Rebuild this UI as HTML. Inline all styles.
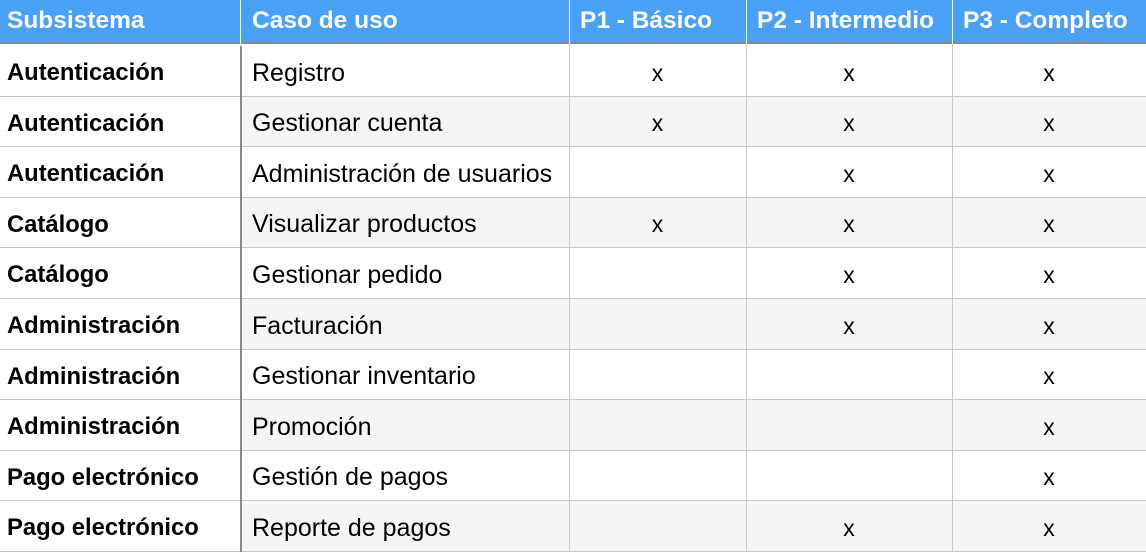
<!DOCTYPE html>
<html><head><meta charset="utf-8"><style>
*{margin:0;padding:0;box-sizing:border-box}
body{width:1146px;height:552px;overflow:hidden;background:#fff;font-family:"Liberation Sans",Arial,sans-serif;position:relative}
.hdr{position:absolute;left:0;top:0;width:1146px;height:44px;background:#48a0f7;border-bottom:2px solid #8a8a8a}
.h{position:absolute;top:0;height:44px;line-height:42px;color:#fff;font-weight:bold;font-size:24.5px;white-space:nowrap}
.vs{position:absolute;top:0;width:1px;height:44px;background:#fff}
.row{position:absolute;left:0;width:1146px;border-bottom:1px solid #c9c9c9}
.alt{background:#f5f5f5}
.c{position:absolute;top:2px;height:100%;display:flex;align-items:center;font-size:25px;color:#000;white-space:nowrap}
.b{font-weight:bold;font-size:23.8px}
.x{justify-content:center;font-size:23px}
.vl{position:absolute;top:44px;width:1px;height:508px;background:#c9c9c9}
</style></head><body>
<div class="hdr">
<div class="h" style="left:7px">Subsistema</div>
<div class="vs" style="left:240px"></div>
<div class="h" style="left:252px">Caso de uso</div>
<div class="vs" style="left:569px"></div>
<div class="h" style="left:580px">P1 - Básico</div>
<div class="vs" style="left:746px"></div>
<div class="h" style="left:757px">P2 - Intermedio</div>
<div class="vs" style="left:952px"></div>
<div class="h" style="left:963px">P3 - Completo</div>
</div>
<div id="rows"></div>
<div class="vl" style="left:569px"></div>
<div class="vl" style="left:746px"></div>
<div class="vl" style="left:952px"></div>
<div style="position:absolute;left:240px;top:46px;width:2px;height:506px;background:#8a8a8a"></div>
<script>
var d=[["Autenticación","Registro",1,1,1],["Autenticación","Gestionar cuenta",1,1,1],["Autenticación","Administración de usuarios",0,1,1],["Catálogo","Visualizar productos",1,1,1],["Catálogo","Gestionar pedido",0,1,1],["Administración","Facturación",0,1,1],["Administración","Gestionar inventario",0,0,1],["Administración","Promoción",0,0,1],["Pago electrónico","Gestión de pagos",0,0,1],["Pago electrónico","Reporte de pagos",0,1,1]];
var h="";
for(var i=0;i<10;i++){var t=Math.round(46+50.6*i),b=Math.round(46+50.6*(i+1));var r=d[i];
h+='<div class="row" style="top:'+t+'px;height:'+(b-t)+'px">';
if(i%2==1)h+='<div class="alt" style="position:absolute;left:241px;top:0;width:905px;height:100%"></div>';
h+='<div class="c b" style="left:7px">'+r[0]+'</div><div class="c" style="left:252px">'+r[1]+'</div>';
var xs=[[569,177],[746,206],[952,194]];
for(var k=0;k<3;k++)if(r[k+2])h+='<div class="c x" style="left:'+xs[k][0]+'px;width:'+xs[k][1]+'px">x</div>';
h+='</div>';}
document.getElementById("rows").innerHTML=h;
</script>
</body></html>
